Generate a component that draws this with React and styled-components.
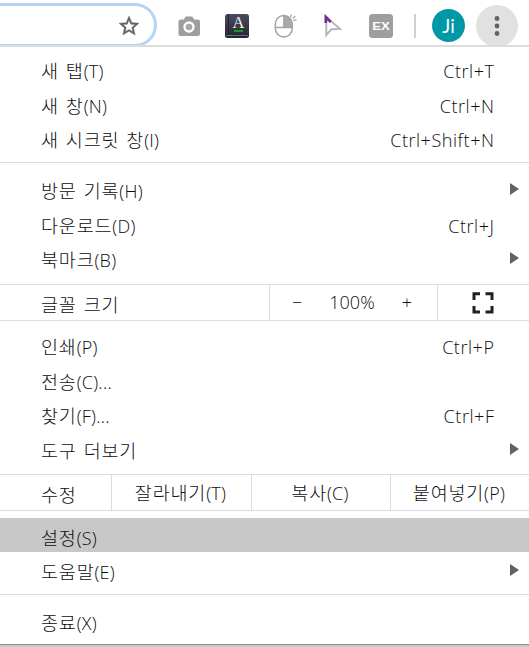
import React from "react";
import styled, { createGlobalStyle } from "styled-components";

const GlobalStyle = createGlobalStyle`
  * {
    box-sizing: border-box;
  }
  body {
    margin: 0;
    background: #fff;
    overflow: hidden;
  }
`;

const Page = styled.div`
  width: 529px;
  height: 647px;
  overflow: hidden;
  color: #0c0d10;
  background: #fff;
  font-family: "Open Sans", "Noto Sans CJK KR", sans-serif;
  font-size: 18px;
  font-weight: 300;
`;

const Toolbar = styled.header`
  display: flex;
  height: 47px;
  overflow: hidden;
  border-bottom: 2px solid #dcdcdd;
`;

const AddressBar = styled.div`
  flex: none;
  display: flex;
  justify-content: flex-end;
  width: 157px;
  height: 44px;
  margin-top: 3px;
  padding: 8px 13px 0 0;
  border: solid #b7d3f9;
  border-width: 3px 3px 3px 0;
  border-radius: 0 22px 22px 0;
`;

const Extensions = styled.div`
  display: flex;
  align-items: center;
  gap: 24px;
  height: 52px;
  padding-left: 20px;
  svg {
    display: block;
  }
`;

const Separator = styled.div`
  width: 2px;
  height: 24px;
  margin-left: 21px;
  margin-top: 14px;
  background: #cfcfcf;
`;

const Avatar = styled.div`
  width: 33px;
  height: 33px;
  margin: 9px 0 0 16px;
  border-radius: 50%;
  background: #0097a7;
  color: #fff;
  font: 400 19px/34px Lato, sans-serif;
  text-align: center;
`;

const MenuButton = styled.div`
  display: flex;
  align-items: center;
  justify-content: center;
  width: 42px;
  height: 42px;
  margin: 5px 0 0 11px;
  border-radius: 50%;
  background: #e1e1e1;
`;

const Group = styled.div`
  padding: ${({ $top = 8 }) => $top}px 0 ${({ $bottom = 8 }) => $bottom}px;
  border-bottom: ${({ $last }) => ($last ? "none" : "1px solid #dadce0")};
`;

const Row = styled.div`
  display: flex;
  justify-content: space-between;
  height: ${({ $active }) => ($active ? 34 : 34.5)}px;
  padding: 3px 35px 0 41px;
  line-height: 34px;
  white-space: nowrap;
  background: ${({ $active }) => ($active ? "#c8c8c8" : "transparent")};
`;

const Hangul = styled.span`
  font-size: 18.5px;
  letter-spacing: 0.8px;
  word-spacing: 1.4px;
`;

const Hint = styled.span`
  letter-spacing: 0.25px;
`;

const Shortcut = styled.span`
  margin-right: -0.5px;
  letter-spacing: 0.55px;
`;

const Arrow = styled.span`
  width: 0;
  height: 0;
  margin: 9px -25px 0 0;
  border: solid transparent;
  border-width: 6px 0 6px 9px;
  border-left-color: #5f6368;
`;

const SplitRow = styled.div`
  display: flex;
  height: 36px;
  line-height: 35px;
  border-bottom: 1px solid #dadce0;
`;

const SplitLabel = styled.div`
  width: ${({ $width }) => $width}px;
  padding: 2px 0 0 41px;
`;

const SplitCell = styled.div`
  display: flex;
  justify-content: ${({ $spread }) => ($spread ? "space-between" : "center")};
  align-items: center;
  width: ${({ $width }) => $width}px;
  padding: ${({ $spread }) => ($spread ? "0 25px 1px 22px" : "0 2px 0 0")};
  border-left: 1px solid #dadce0;
  white-space: nowrap;
`;

const BottomEdge = styled.div`
  height: 3px;
  background: #c8c8c8;
  border-top: 1px solid #8e8e8e;
`;

function StarIcon() {
  return (
    <svg width="24" height="24" viewBox="0 0 24 24" fill="#5f6368">
      <path
        d="M22 9.240l-7.190-.62L12 2 9.190 8.630 2 9.240l5.460 4.730L5.820 21 12 17.270 18.180 21l-1.630-7.030L22 9.240zM12 15.400l-3.760 2.270 1-4.280-3.320-2.880 4.380-.38L12 6.100l1.710 4.040 4.380.38-3.320 2.880 1 4.280L12 15.400z"
        stroke="#5f6368"
        strokeWidth="0.4"
      />
    </svg>
  );
}

function CameraIcon() {
  return (
    <svg width="24" height="24" viewBox="0 0 24 24">
      <path d="M3.500 5.500h3.500l1-2q.5-1 1.500-1h5q1 0 1.500 1l1 2h4q2 0 2 2v12.500q0 2-2 2h-17.500q-2 0-2-2V7.500q0-2 2-2z" fill="#9e9e9e" />
      <circle cx="12" cy="13" r="4.500" fill="#a8a8a8" stroke="#fff" strokeWidth="2.400" />
    </svg>
  );
}

function DictionaryIcon() {
  return (
    <svg width="24" height="24" viewBox="0 0 24 24">
      <defs>
        <linearGradient id="cover" x2="0" y2="1">
          <stop stopColor="#4c4c60" />
          <stop offset="1" stopColor="#242433" />
        </linearGradient>
      </defs>
      <rect width="24" height="24" rx="2.500" fill="url(#cover)" />
      <path d="M3.500 0v21" stroke="#20202c" />
      <path d="M1 21.500h22" stroke="#686873" />
      <path d="M4 21.500h3" stroke="#20b020" />
      <text x="13.500" y="14" fill="#f2f2f2" fontFamily="Liberation Serif" fontSize="16.500" fontWeight="400" textAnchor="middle">A</text>
      <path d="M9 17h9" stroke="#18a818" strokeWidth="1.800" />
    </svg>
  );
}

function MouseIcon() {
  return (
    <svg width="24" height="24" viewBox="0 0 24 24" fill="none" stroke="#a3a3a3">
      <path d="M11 1.500v12h8V9.500C19 4.500 16 1.500 11 1.500z" fill="#aaa" stroke="none" />
      <rect x="2.300" y="1.500" width="17" height="21.500" rx="8.500" strokeWidth="1.500" />
      <path d="M10.800 2v11.500M2.500 13.500h16.500" strokeWidth="1.300" />
      <path d="M17.500 3l.8-2.500M20 4.500L22.300 2M20.500 6.300l3-.4" strokeWidth="1.300" />
    </svg>
  );
}

function CursorIcon() {
  return (
    <svg width="24" height="24" viewBox="0 0 24 24" fill="none" strokeWidth="2">
      <path d="M5.300 3v18l5-5.700 8.700-.5L5.300 3z" stroke="#b9b7bd" />
      <path d="M4.800 9V3l5 5.200" stroke="#712b91" strokeWidth="2.600" />
    </svg>
  );
}

function ExIcon() {
  return (
    <svg width="24" height="24" viewBox="0 0 24 24">
      <rect width="24" height="24" rx="3.500" fill="#9e9e9e" />
      <text x="12" y="16" fill="#fff" fontFamily="Liberation Sans" fontSize="11.500" fontWeight="700" textAnchor="middle" textLength="17.500" lengthAdjust="spacingAndGlyphs">EX</text>
    </svg>
  );
}

function DotsIcon() {
  return (
    <svg width="6" height="20" viewBox="0 0 6 20" fill="#5f6368">
      <circle cx="3" cy="2.500" r="2.400" />
      <circle cx="3" cy="10" r="2.400" />
      <circle cx="3" cy="17.500" r="2.400" />
    </svg>
  );
}

function FullscreenIcon() {
  return (
    <svg width="22" height="22" viewBox="0 0 22 22" fill="none" stroke="#202124" strokeWidth="3">
      <path d="M2 8V1.800H8M13.500 1.800H20V8M20 14v6H13.500M8 20H2V14" />
    </svg>
  );
}

// "text" is the Korean part, "hint" the access key that follows it
function Label({ text, hint }) {
  return (
    <span>
      <Hangul>{text}</Hangul>
      {hint && <Hint>{hint}</Hint>}
    </span>
  );
}

function MenuItem({ text, hint, shortcut, submenu, active }) {
  return (
    <Row $active={active}>
      <Label text={text} hint={hint} />
      {shortcut && <Shortcut>{shortcut}</Shortcut>}
      {submenu && <Arrow />}
    </Row>
  );
}

export default function App() {
  return (
    <>
      <GlobalStyle />
      <Page>
        <Toolbar>
          <AddressBar>
            <StarIcon />
          </AddressBar>
          <Extensions>
            <CameraIcon />
            <DictionaryIcon />
            <MouseIcon />
            <CursorIcon />
            <ExIcon />
          </Extensions>
          <Separator />
          <Avatar>Ji</Avatar>
          <MenuButton>
            <DotsIcon />
          </MenuButton>
        </Toolbar>
        <Group $top={4} $bottom={7.5}>
          <MenuItem text="새 탭" hint="(T)" shortcut="Ctrl+T" />
          <MenuItem text="새 창" hint="(N)" shortcut="Ctrl+N" />
          <MenuItem text="새 시크릿 창" hint="(I)" shortcut="Ctrl+Shift+N" />
        </Group>
        <Group $bottom={9.5}>
          <MenuItem text="방문 기록" hint="(H)" submenu />
          <MenuItem text="다운로드" hint="(D)" shortcut="Ctrl+J" />
          <MenuItem text="북마크" hint="(B)" submenu />
        </Group>
        <SplitRow>
          <SplitLabel $width={269}>
            <Label text="글꼴 크기" />
          </SplitLabel>
          <SplitCell $width={168} $spread>
            <span>−</span>
            <span>100%</span>
            <span>+</span>
          </SplitCell>
          <SplitCell $width={92}>
            <FullscreenIcon />
          </SplitCell>
        </SplitRow>
        <Group $top={6} $bottom={9}>
          <MenuItem text="인쇄" hint="(P)" shortcut="Ctrl+P" />
          <MenuItem text="전송" hint="(C)..." />
          <MenuItem text="찾기" hint="(F)..." shortcut="Ctrl+F" />
          <MenuItem text="도구 더보기" submenu />
        </Group>
        <SplitRow>
          <SplitLabel $width={111}>
            <Label text="수정" />
          </SplitLabel>
          <SplitCell $width={140}>
            <Label text="잘라내기" hint="(T)" />
          </SplitCell>
          <SplitCell $width={139}>
            <Label text="복사" hint="(C)" />
          </SplitCell>
          <SplitCell $width={139}>
            <Label text="붙여넣기" hint="(P)" />
          </SplitCell>
        </SplitRow>
        <Group $top={7} $bottom={7.5}>
          <MenuItem text="설정" hint="(S)" active />
          <MenuItem text="도움말" hint="(E)" submenu />
        </Group>
        <Group $top={8} $bottom={6.5} $last>
          <MenuItem text="종료" hint="(X)" />
        </Group>
        <BottomEdge />
      </Page>
    </>
  );
}
